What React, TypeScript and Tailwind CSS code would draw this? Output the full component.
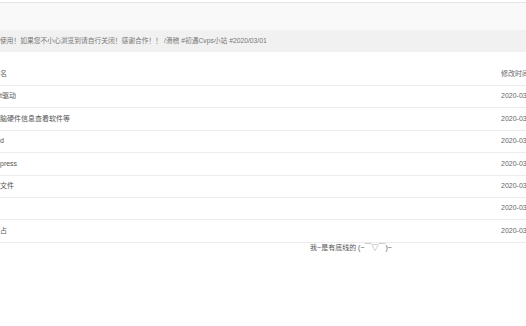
import React from "react";

const rows = [
  "t驱动",
  "脑硬件信息查看软件等",
  "d",
  "press",
  "文件",
  "",
  "占",
];

export default function App() {
  return (
    <div
      className="w-[526px] h-[326px] overflow-hidden bg-white text-[#666]"
      style={{ fontFamily: '"Liberation Sans", "Noto Sans CJK SC", sans-serif' }}
    >
      <div className="h-[2px] bg-white" />
      <div className="h-[28px] border-t border-[#e6e6e6] bg-[#f9f9f9]" />
      <div className="h-[22px] bg-[#f1f1f1] flex items-center text-[6.75px] text-[#777] whitespace-nowrap">
        使用！如果您不小心浏览到请自行关闭！感谢合作！！ /滑稽 #初遇Cvps小站 #2020/03/01
      </div>
      <div className="h-[9px]" />
      <div className="text-[7px] text-[#555]">
        <div className="h-[25px] pt-[2px] flex items-center justify-between border-b border-[#ececec] whitespace-nowrap">
          <span className="text-[#666]">名</span>
          <span className="w-[25px] overflow-hidden text-[#666]">修改时间</span>
        </div>
        {rows.map((r, i) => (
          <div
            key={i}
            className="h-[22.4px] flex items-center justify-between border-b border-[#ececec] whitespace-nowrap"
          >
            <span>{r}</span>
            <span className="w-[25px] overflow-hidden text-[#666]">2020-03-01</span>
          </div>
        ))}
      </div>
      <div className="ml-[176px] flex justify-center text-[7px] text-[#555] leading-[10px]">
        我~是有底线的 (~￣▽￣)~
      </div>
    </div>
  );
}
